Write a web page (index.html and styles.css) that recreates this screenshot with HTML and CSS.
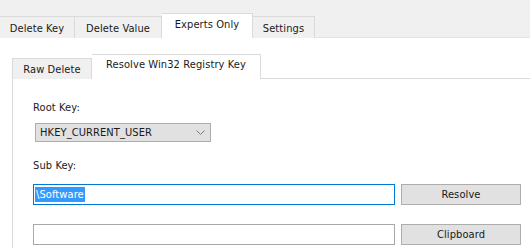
FILE: index.html
```html
<!DOCTYPE html>
<html lang="en">
<head>
    <meta charset="UTF-8">
    <title>Registry Tools</title>
    <link rel="stylesheet" href="styles.css">
</head>
<body>

    <div class="tab-strip">
        <div class="tab">Delete Key</div>
        <div class="tab tab-value">Delete Value</div>
        <div class="tab tab-active tab-experts">Experts Only</div>
        <div class="tab tab-settings">Settings</div>
    </div>

    <div class="page">
        <div class="sub-strip">
            <div class="subtab">Raw Delete</div>
            <div class="subtab subtab-active">Resolve Win32 Registry Key</div>
        </div>

        <div class="sub-page">
            <div class="label">Root Key:</div>
            <div class="combo">
                <span>HKEY_CURRENT_USER</span>
                <svg width="9" height="5" viewBox="0 0 9 5">
                    <polyline points="0.5,0.5 4.5,4.5 8.5,0.5" fill="none" stroke="#7a7a7a" stroke-width="1"/>
                </svg>
            </div>

            <div class="label label-sub">Sub Key:</div>
            <div class="field-row">
                <div class="textbox textbox-focus"><span class="selected">\Software</span></div>
                <button class="btn">Resolve</button>
            </div>
            <div class="field-row field-row-last">
                <div class="textbox"></div>
                <button class="btn">Clipboard</button>
            </div>
        </div>
    </div>

</body>
</html>
```

FILE: styles.css
```css
body {
    font-family: 'DejaVu Sans Condensed', 'DejaVu Sans', Verdana, sans-serif;
    font-size: 11px;
    letter-spacing: 0.1px;
    color: #1a1a1a;
    margin: 0;
    background: #ffffff;
    overflow: hidden;
}

.tab-strip {
    display: flex;
    align-items: flex-end;
    height: 38px;
    background: #f0f0f0;
    border-bottom: 1px solid #e3e3e3;
    box-sizing: border-box;
}

.tab {
    height: 22px;
    line-height: 23px;
    width: 75px;
    box-sizing: border-box;
    text-align: center;
    border: 1px solid #dadada;
    border-bottom: none;
    border-left: none;
    background: #f0f0f0;
    margin-bottom: -1px;
}

.tab-value {
    width: 87px;
}

.tab-experts {
    width: 91px;
}

.tab-settings {
    width: 62px;
}

.tab-active {
    height: 25px;
    line-height: 22px;
    background: #ffffff;
    border-color: #dadada;
}

.page {
    padding: 16px 0 0 12px;
}

.sub-strip {
    display: flex;
    align-items: flex-end;
    height: 24px;
}

.subtab {
    width: 80px;
    height: 21px;
    line-height: 20px;
    padding-top: 1px;
    box-sizing: border-box;
    text-align: center;
    background: #f0f0f0;
    border: 1px solid #dadada;
    border-bottom: none;
    margin-bottom: -1px;
}

.subtab-active {
    width: 169px;
    height: 25px;
    padding-top: 0;
    line-height: 20px;
    background: #ffffff;
    border-left: none;
    position: relative;
}

.sub-page {
    border-top: 1px solid #dadada;
    border-left: 1px solid #dadada;
    padding: 22px 0 4px 20px;
}

.label {
    line-height: 13px;
    height: 13px;
}

.label-sub {
    margin-top: 17px;
}

.combo {
    margin-top: 9px;
    width: 176px;
    height: 19px;
    box-sizing: border-box;
    background: #e1e1e1;
    border: 1px solid #adadad;
    display: flex;
    align-items: center;
    justify-content: space-between;
    padding: 0 5px 0 4px;
    margin-left: 2px;
}

.field-row {
    display: flex;
    gap: 6px;
    margin-top: 12px;
    height: 21px;
}

.field-row-last {
    margin-top: 19px;
}

.textbox {
    width: 362px;
    height: 21px;
    box-sizing: border-box;
    border: 1px solid #a8a8a8;
    background: #ffffff;
    padding: 2px 1px;
    line-height: 15px;
}

.textbox-focus {
    border-color: #0078d7;
}

.selected {
    background: #3399ff;
    color: #ffffff;
    display: inline-block;
    padding: 0 1px;
}

.btn {
    width: 120px;
    height: 21px;
    font-family: inherit;
    font-size: 11px;
    letter-spacing: 0.1px;
    color: #1a1a1a;
    background: #e1e1e1;
    border: 1px solid #adadad;
    padding: 0;
}
```
